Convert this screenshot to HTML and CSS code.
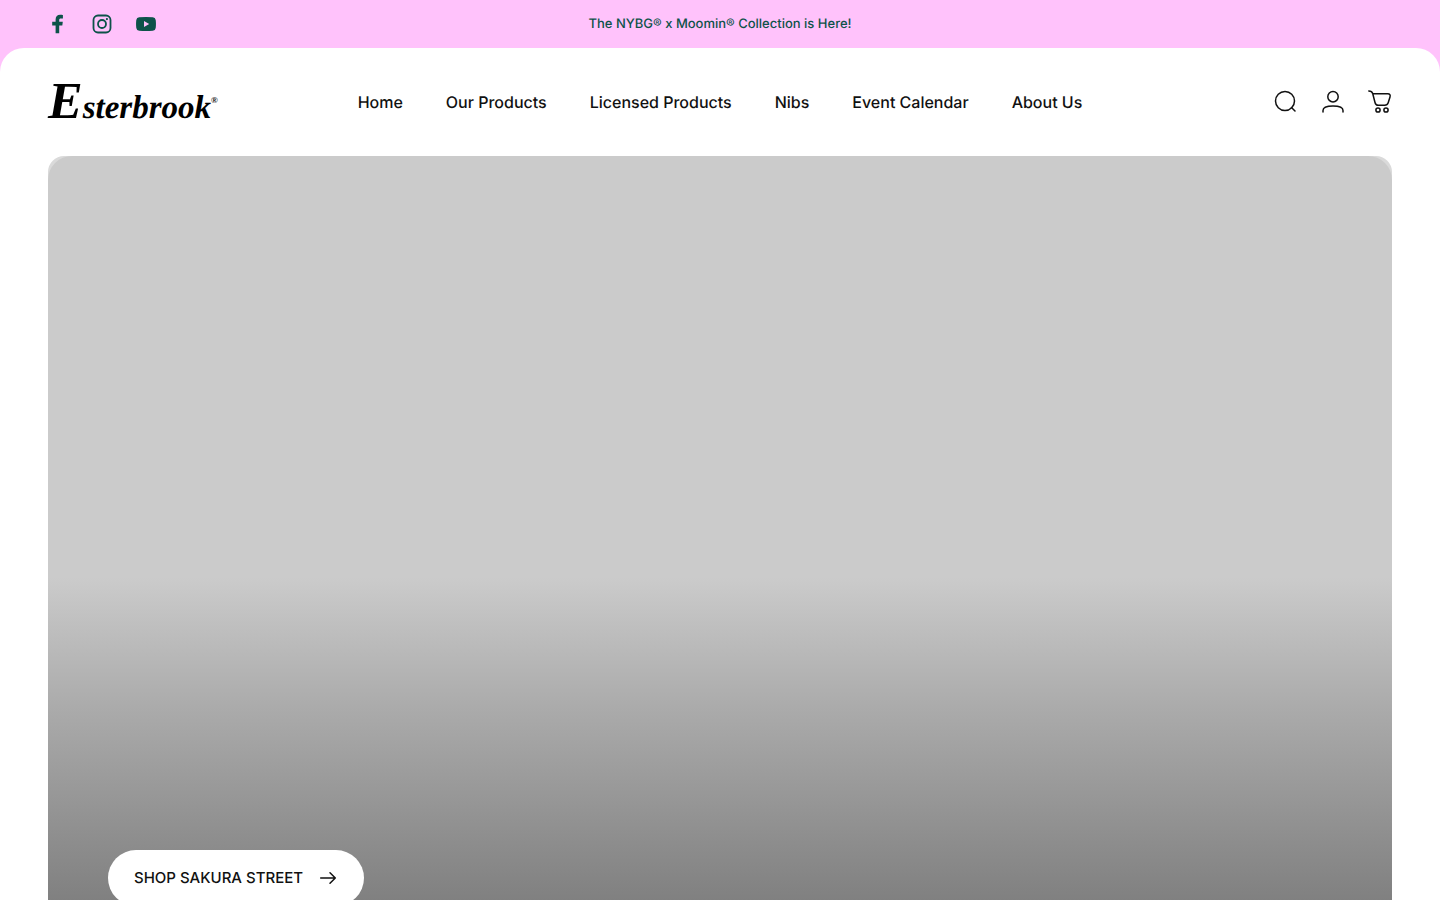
FILE: index.html
```html
<!DOCTYPE html>
<html lang="en">

<head>
    <meta charset="UTF-8">
    <meta name="viewport" content="width=device-width, initial-scale=1.0">
    <title>Esterbrook</title>
    <link rel="stylesheet" href="styles.css">
</head>

<body>

    <div class="top-bar">
        <div class="social">
            <a href="#" aria-label="Facebook">
                <svg viewBox="0 0 20 20" width="20" height="20" fill="currentColor">
                    <path d="M7.6 19.2V11.4H4.2V7.8h3.4V5.6C7.6 2.6 9.3.8 12.1.8c1.3 0 2.5.1 2.8.2v3.4h-1.9c-1.5 0-1.8.7-1.8 1.7v1.7h3.6l-.5 3.6h-3.1v7.8z"/>
                </svg>
            </a>
            <a href="#" aria-label="Instagram">
                <svg viewBox="0 0 20 20" width="20" height="20" fill="none" stroke="currentColor" stroke-width="1.8">
                    <rect x="1.5" y="1.5" width="17" height="17" rx="4.5"/>
                    <circle cx="10" cy="10" r="4"/>
                    <circle cx="14.9" cy="5.1" r="1.1" fill="currentColor" stroke="none"/>
                </svg>
            </a>
            <a href="#" aria-label="YouTube">
                <svg viewBox="0 0 20 20" width="20" height="20" fill="currentColor">
                    <path fill-rule="evenodd" d="M3.2 3.2Q10 2.6 16.8 3.2Q19.4 3.4 19.7 6Q20.2 10 19.7 14Q19.4 16.6 16.8 16.8Q10 17.4 3.2 16.8Q.6 16.6.3 14Q-.2 10 .3 6Q.6 3.4 3.2 3.2ZM8 7.1v5.8l5.2-2.9z"/>
                </svg>
            </a>
        </div>
        <p class="announcement">The NYBG® x Moomin® Collection is Here!</p>
    </div>

    <div class="page">
        <header class="header">
            <a href="#" class="logo"><span class="logo-initial">E</span>sterbrook<span class="logo-mark">®</span></a>

            <nav class="nav">
                <a href="#">Home</a>
                <a href="#">Our Products</a>
                <a href="#">Licensed Products</a>
                <a href="#">Nibs</a>
                <a href="#">Event Calendar</a>
                <a href="#">About Us</a>
            </nav>

            <div class="actions">
                <button type="button" aria-label="Search">
                    <svg class="icon" viewBox="0 0 24 24" width="24" height="24">
                        <circle cx="13" cy="11" r="9.5"/>
                        <path d="M19.5 17.5l3.5 3.5"/>
                    </svg>
                </button>
                <a href="#" aria-label="Account">
                    <svg class="icon" viewBox="0 0 24 24" width="24" height="24">
                        <circle cx="13" cy="6.7" r="5.2"/>
                        <path d="M3 22v-1.5C3 17.5 6.5 16 13 16s10 1.5 10 4.5V22"/>
                    </svg>
                </a>
                <button type="button" aria-label="Cart">
                    <svg class="icon" viewBox="0 0 24 24" width="24" height="24">
                        <path d="M.8 1c2.2 0 3.3.4 3.9 2.5l2.3 9c.5 2 1.3 2.8 3.3 2.8h6.4c2 0 2.9-.7 3.5-2.5l1.8-5.8c.6-2-.2-3.2-2.2-3.2H4.8"/>
                        <circle cx="10" cy="20" r="2.1"/>
                        <circle cx="18" cy="20" r="2.1"/>
                    </svg>
                </button>
            </div>
        </header>

        <main class="hero">
            <div class="hero-slide">
                <a href="#" class="shop-button">
                    SHOP SAKURA STREET
                    <svg class="icon" viewBox="0 0 20 20" width="20" height="20">
                        <path d="M2.7 10h14.6M12 4.7l5.3 5.3-5.3 5.3"/>
                    </svg>
                </a>
            </div>
        </main>
    </div>

</body>

</html>
```
FILE: styles.css
```css
* {
    box-sizing: border-box;
}

body {
    margin: 0;
    background-color: #ffc2fb;
    color: #111;
    font-family: Inter, sans-serif;
    text-rendering: geometricPrecision;
}

a {
    color: inherit;
    text-decoration: none;
}

button {
    padding: 0;
    border: none;
    background: none;
    color: inherit;
    cursor: pointer;
}

svg {
    display: block;
}

.top-bar {
    display: grid;
    grid-template-columns: 1fr auto 1fr;
    align-items: center;
    height: 48px;
    padding: 0 48px;
    color: #0d5249;
}

.social {
    display: flex;
    gap: 24px;
}

.announcement {
    margin: 0;
    font-size: 13px;
    font-weight: 500;
    line-height: 20px;
}

.page {
    background-color: #fff;
    border-radius: 24px 24px 0 0;
}

.header {
    display: grid;
    grid-template-columns: 1fr auto 1fr;
    align-items: center;
    height: 108px;
    padding: 0 48px;
}

.logo {
    display: flex;
    align-items: baseline;
    padding-top: 6px;
    color: #000;
    font-family: "Liberation Serif", serif;
    font-size: 33px;
    font-style: italic;
    font-weight: bold;
    line-height: 48px;
}

.logo-initial {
    font-size: 52px;
}

.logo-mark {
    align-self: center;
    padding-bottom: 10px;
    font-size: 9px;
    font-style: normal;
    line-height: 9px;
}

.nav {
    display: flex;
    gap: 43px;
    font-size: 16px;
    font-weight: 500;
}

.actions {
    display: flex;
    justify-content: flex-end;
    gap: 24px;
}

.icon {
    fill: none;
    stroke: currentColor;
    stroke-width: 1.5;
    stroke-linecap: round;
    stroke-linejoin: round;
}

/* Hero */
.hero {
    margin: 0 48px;
    background-color: #dadada;
    border-radius: 16px 16px 0 0;
}

.hero-slide {
    display: flex;
    align-items: flex-end;
    height: 90vh;
    padding: 60px;
    background: linear-gradient(#cbcbcb 52%, #ababab 68%, #808080 92%, #777);
    border-radius: 24px 24px 0 0;
}

.shop-button {
    display: flex;
    align-items: center;
    gap: 15px;
    height: 56px;
    padding: 0 26px;
    background-color: #fff;
    border-radius: 28px;
    font-size: 15px;
    font-weight: 500;
    line-height: 20px;
}
```
